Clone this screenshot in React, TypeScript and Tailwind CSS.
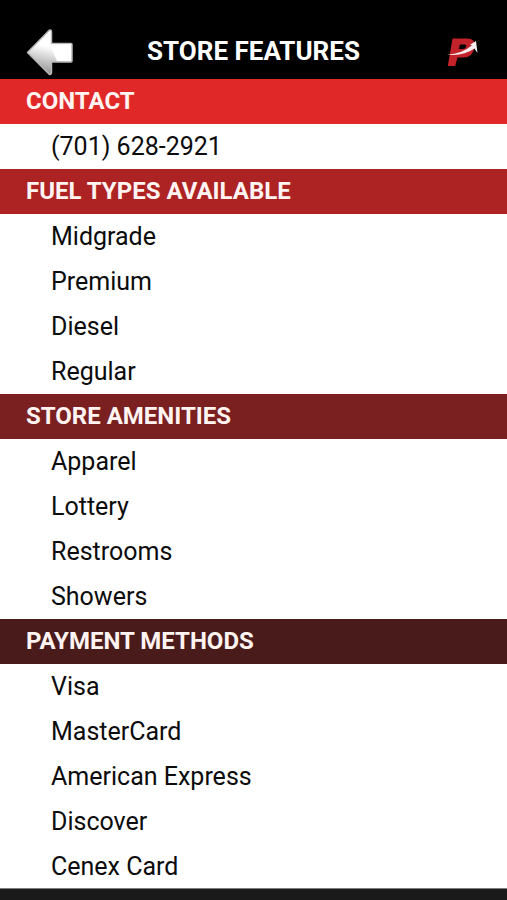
import React from 'react';

interface Section {
  title: string;
  color: string;
  items: string[];
}

const PHONE = '(701) 628-2921';

const sections: Section[] = [
  { title: 'CONTACT', color: 'bg-[#e12828]', items: [PHONE] },
  {
    title: 'FUEL TYPES AVAILABLE',
    color: 'bg-[#ad2323]',
    items: ['Midgrade', 'Premium', 'Diesel', 'Regular'],
  },
  {
    title: 'STORE AMENITIES',
    color: 'bg-[#7a2020]',
    items: ['Apparel', 'Lottery', 'Restrooms', 'Showers'],
  },
  {
    title: 'PAYMENT METHODS',
    color: 'bg-[#4a1b1b]',
    items: ['Visa', 'MasterCard', 'American Express', 'Discover', 'Cenex Card'],
  },
];

function BackArrow() {
  return (
    <svg width="48" height="48" viewBox="0 0 48 48" aria-hidden="true">
      <defs>
        <linearGradient id="arrow" x1="0.5" y1="0.38" x2="0.38" y2="0.95">
          <stop offset="0" stopColor="#ffffff" />
          <stop offset="1" stopColor="#999999" />
        </linearGradient>
      </defs>
      <path
        d="M1.5 24.5 L23 2.5 Q25.5 1 25.5 4 V15.5 H45 Q46 15.5 46 16.5 V33 Q46 34 45 34 H25.5 V44 Q25.5 47.5 23 46 Z"
        fill="url(#arrow)"
        stroke="#b8b8b8"
        strokeWidth="1.5"
        strokeLinejoin="round"
      />
      <path d="M24 16.5 H45 V33 H31 Z" fill="#ffffff" />
    </svg>
  );
}

function BrandLogo() {
  return (
    <svg width="34" height="30" viewBox="0 0 34 30" aria-hidden="true">
      <path
        fillRule="evenodd"
        d="M5.5 1.5 H20 Q29 1.5 27.5 10 Q26 20 17 20.5 H10.5 L8.2 29 H0.8 Z M13 7.5 L11.8 12 H15.5 Q18.5 12 19.2 9.7 Q19.7 7.5 17.5 7.5 Z"
        fill="#c3222a"
      />
      {/* 白色弧线箭头 */}
      <path
        d="M0 17.5 Q15 17 25 8.2 L23 7.8 L29 4 L30.5 16 L27.5 11.500 Q16 19.500 0 17.5 Z"
        fill="#f6eeee"
      />
    </svg>
  );
}

function FeatureSection({ title, color, items }: Section) {
  return (
    <section>
      <h2 className={`${color} h-[45px] pl-[26px] text-2xl leading-[45px] font-bold text-[#fff4f2]`}>
        {title}
      </h2>
      <ul className="bg-white pl-[51px] text-[25px] leading-[45px] text-[#0c0c0c]">
        {items.map((item) => (
          <li key={item} className="h-[45px]">
            {item === PHONE ? <a href="tel:+17016282921">{item}</a> : item}
          </li>
        ))}
      </ul>
    </section>
  );
}

export default function App() {
  return (
    <div className="flex min-h-screen flex-col bg-[#1a1a1a] font-['Roboto',sans-serif]">
      <header className="grid h-[79px] grid-cols-[1fr_auto_1fr] items-center bg-black px-[26px] pt-6">
        <button type="button" aria-label="Back" className="justify-self-start">
          <BackArrow />
        </button>
        <h1 className="text-[26px] font-bold text-white">STORE FEATURES</h1>
        <div className="justify-self-end">
          <BrandLogo />
        </div>
      </header>
      <main>
        {sections.map((section) => (
          <FeatureSection key={section.title} {...section} />
        ))}
      </main>
      <footer className="-mt-px flex-1 border-t border-[#7d7d7d] bg-[#1a1a1a]" />
    </div>
  );
}
